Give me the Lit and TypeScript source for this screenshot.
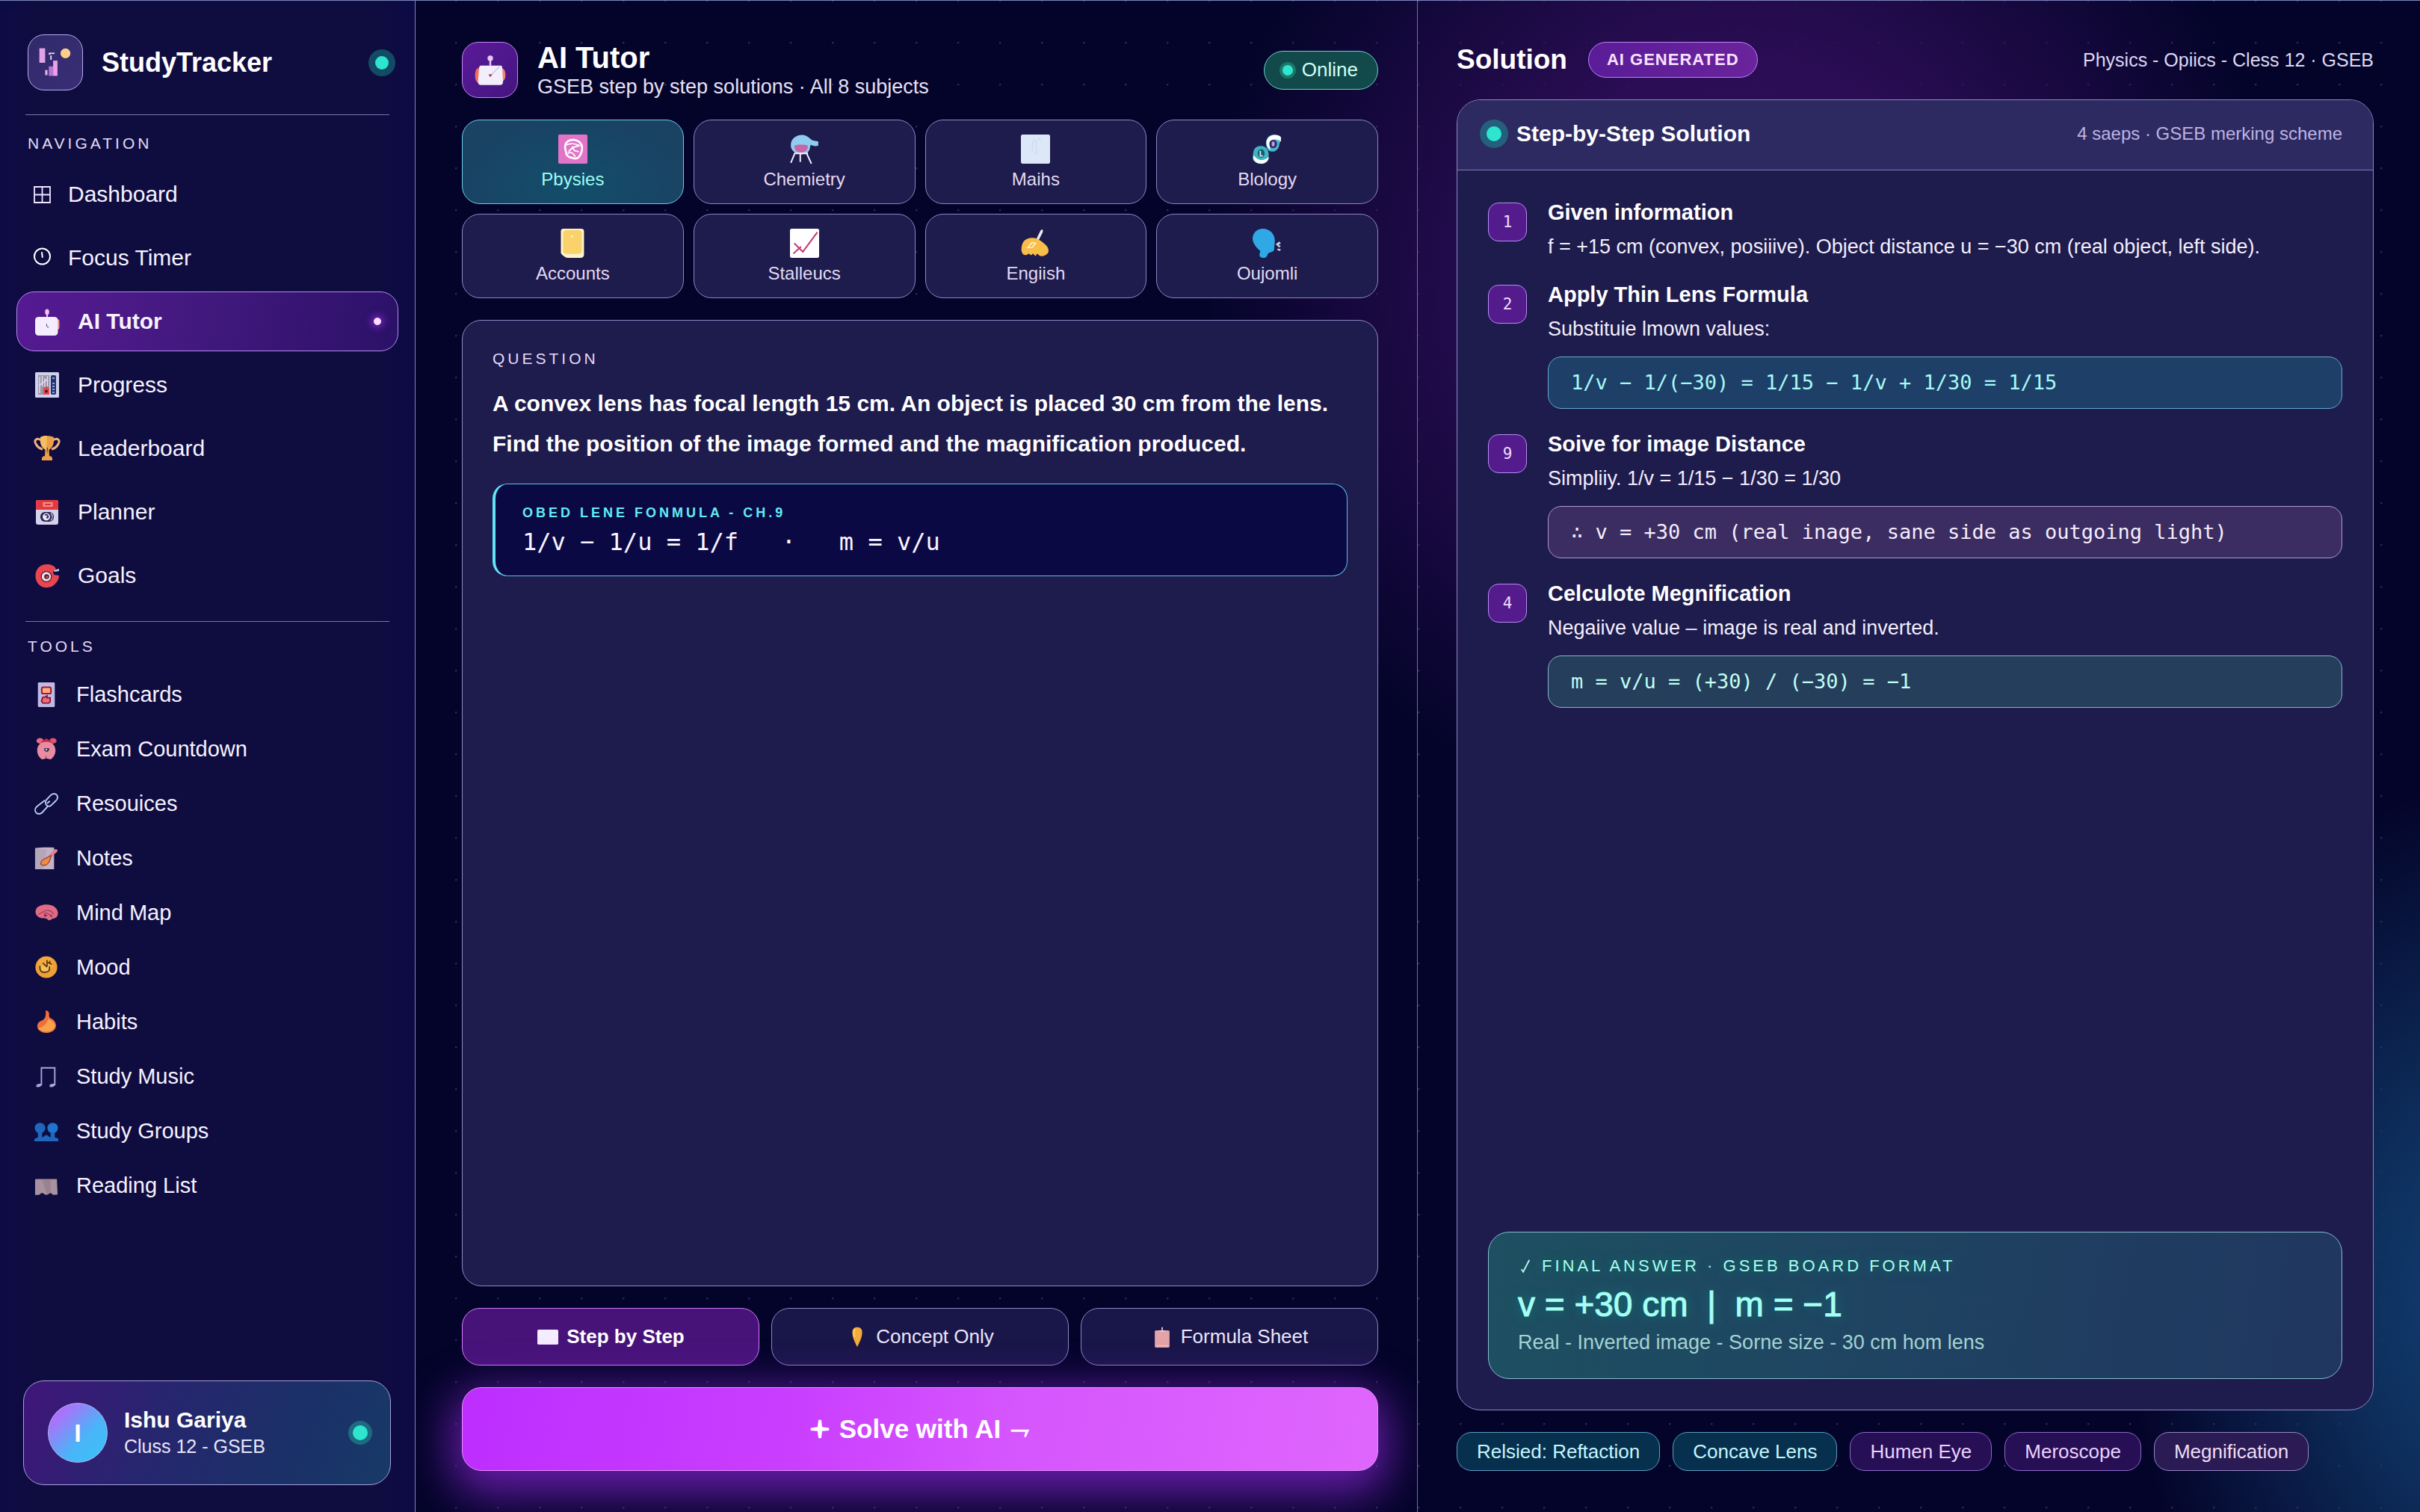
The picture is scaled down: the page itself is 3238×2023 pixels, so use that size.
import { LitElement, html, css, svg, type TemplateResult } from "lit";
import { customElement, property, state } from "lit/decorators.js";
import { classMap } from "lit/directives/class-map.js";

/* Icon artwork, each drawn on a 34 x 34 board. */
const ART: Record<string, TemplateResult> = {
  logo: svg`
    <rect x="6" y="7" width="4" height="10" fill="#dfa3e6"/>
    <path d="M13 11.500V10.500H16.500M14 12v3" stroke="#e6d8f5" stroke-width="1" fill="none"/>
    <circle cx="24" cy="10.500" r="3.400" fill="#ffcf8a"/>
    <path d="M15.500 15.500h3v10.500h-3z" fill="#e9a2ea"/>
    <path d="M12.500 19.500h3v6.500h-3z" fill="#b777d2"/>
    <path d="M10 22h1.600v3.500H10z" fill="#e3b5ee"/>`,
  grid: svg`<path d="M6 7h21v21H6zM16.500 7v21M6 17.500h21" fill="none" stroke="#f0e6ff" stroke-width="1.800"/>`,
  timer: svg`<circle cx="16.500" cy="15" r="10.500" fill="none" stroke="#fff" stroke-width="2"/><path d="M16 10l.8 6" stroke="#fff" stroke-width="2" stroke-linecap="round"/>`,
  robot: svg`
    <ellipse cx="17" cy="4.500" rx="2.800" ry="4" fill="#f3c3ee"/><path d="M16 7h2v6h-2z" fill="#f3c3ee"/>
    <path d="M26 14h4.500c2 0 3 1.200 3 3v8c0 2-1 3-3 3H26z" fill="#ee8d86"/>
    <rect x="1" y="11" width="30.500" height="25" rx="4.500" fill="#f4ecff"/>
    <path d="M16.500 20.500c-.4 2.500.4 4.500 2.500 4.500" fill="none" stroke="#3a2c52" stroke-width="1"/>`,
  robotBig: svg`
    <circle cx="17" cy="4" r="3" fill="#e9c6f3"/><path d="M16 6h2v6h-2z" fill="#e9c6f3"/>
    <ellipse cx="4" cy="22.500" rx="3.500" ry="8" fill="#ef6f62"/><ellipse cx="30" cy="22" rx="3.500" ry="7" fill="#ef8272"/>
    <path d="M7 12h21c1.500 0 2 1 2 2.500l.8 14c.2 3-1 4.500-3 4.500H6.500c-2 0-3-1.500-2.800-4L5 14c0-1.300.8-2 2-2z" fill="#f3eefc"/>
    <path d="M27 13l-9 9" stroke="#a8a3c4" stroke-width=".8"/><path d="M15 21.500h4.200L17 24.500z" fill="#9a3450"/>`,
  news: svg`
    <rect x="1" y="0" width="32" height="34" rx="1.500" fill="#cfd0ea"/>
    <rect x="5" y="4" width="15" height="26" fill="#9a94a9"/>
    <path d="M7 6v22M10.500 5v14M14 8v12M17.500 5v14M6 18l11-8" stroke="#e8e4f4" stroke-width="1.300"/>
    <path d="M12 30V22c2-4 6-3 8 0v8z" fill="#e8464c"/><circle cx="16" cy="25.500" r="2" fill="#4b1733"/>
    <rect x="22" y="4" width="7" height="26" rx="2" fill="#1f3370"/>
    <path d="M24 8h3M24 15h3M24 19h3M24 23h3M24 27h3" stroke="#b8c8ee" stroke-width="1.600"/>`,
  trophy: svg`
    <path d="M9 6c-6-4-10 0-7 5 2 4 5 6 9 7M25 6c6-4 10 0 7 5-2 4-5 6-9 7" fill="none" stroke="#f1b27f" stroke-width="3"/>
    <path d="M8 2c4-2.500 14-2.500 18 0 1 9-2 14-6.500 17l.5 8c3 .5 4 1.500 4 3.500v2.500H10v-2.500c0-2 1-3 4-3.500l.5-8C10 16 7 11 8 2z" fill="#eba047"/>
    <path d="M8 2c4-2.500 9-2 9-2l-1 19C10 16 7 11 8 2z" fill="#f6bd62"/>
    <path d="M16.500 15l1.500 2-1 8z" fill="#5b2b1c"/>`,
  calendar: svg`
    <rect x="2" y="1" width="30" height="33" rx="3" fill="#d6d1ea"/>
    <path d="M2 14V5c0-2.500 1-4 3.500-4h23C31 1 32 2.500 32 5v9z" fill="#e5393f"/>
    <rect x="11.500" y="4" width="13" height="6" fill="#f08f88"/><rect x="14" y="6" width="8" height="2" fill="#c93a3f"/>
    <rect x="8" y="17" width="18" height="13" rx="6" fill="#292552"/>
    <circle cx="16" cy="23.500" r="5" fill="#e8e4f8"/><path d="M14 21c3-1 5 1 4 3.500h-2" fill="none" stroke="#292552" stroke-width="1.800"/>
    <path d="M22 18.500c2.500 3 2.500 7 0 10" fill="none" stroke="#c9c4e4" stroke-width="1.300"/>`,
  target: svg`
    <path d="M17 2c6 0 10 2.500 12 6l-4 4 1 4 7 1c0 4-2 8-5 11-5 6-15 7-21 2C0 24 0 13 5 7c3-3.500 7-5 12-5z" fill="#ea4650"/>
    <path d="M26 10l7-2v3l-6 1z" fill="#b9d2f4"/>
    <circle cx="16" cy="18.500" r="7.500" fill="#4a1d38"/><circle cx="16" cy="18.500" r="6.200" fill="#f4dde6"/>
    <circle cx="16.500" cy="18.500" r="3.300" fill="#572030"/><circle cx="17" cy="19" r="1.500" fill="#b06c55"/>`,
  flash: svg`
    <rect x="5" y="0" width="24" height="35" rx="1.500" fill="#bfb9e4"/>
    <rect x="10.500" y="7" width="13" height="9" rx="2" fill="#ffb07f" stroke="#a8162a" stroke-width="2.200"/>
    <path d="M12 21h3l3-2v3h4.500v5.500l-2 2H12l-2-3z" fill="#ea6a80" stroke="#7e1327" stroke-width="1.800"/>`,
  alarm: svg`
    <ellipse cx="8" cy="5.500" rx="5" ry="4" fill="#e76b83"/><ellipse cx="26.500" cy="5.500" rx="5" ry="4" fill="#dc5670"/>
    <path d="M9 7l8-5 8 5-2 5H11z" fill="#ce2748"/>
    <path d="M17 7c8 0 13 5 13 12 0 6-3 10-7 13l-6-1.500L11 32c-4-3-7-7-7-13C4 12 9 7 17 7z" fill="#e98ba1"/>
    <path d="M14 16h7v3l-3 2.500-4-2z" fill="#43304f"/><circle cx="17" cy="18" r="1.200" fill="#e7dcef"/><path d="M16.500 27v4" stroke="#8e3b5c" stroke-width="1.200"/>`,
  link: svg`<g fill="none" stroke="#b9cdf6" stroke-width="2">
    <path d="M16.500 12.500l7-7.500c3-2.500 7-2.500 8.700.5 1.400 2.500.5 5.300-1.500 7.500l-7.200 7c-2.500 2-6 1-7-1.500-1-2-.8-4 0-6z"/>
    <path d="M15 12.500L4 21c-3 2.500-3.800 6-2 8.500 2 3 6 3 9 .5l8-9"/><path d="M18 17l4-3.500"/></g>`,
  memo: svg`
    <path d="M1 3c9-1.500 18-1 27-1v31H1z" fill="#c3b3c6"/>
    <path d="M1 3c4 2 12 1.500 17 2l-6 28H1z" fill="#ad9cb1" opacity=".6"/>
    <path d="M10 21c5-5 12-7 16-14 2-3.500 6-3 7-1-1 4-6 5-8 10-2 4-4 10-9 12-3 1-6 0-7-1z" fill="#e5838c"/>
    <path d="M10 21c5-4 9-4 14-8-2 7-3 12-8 14-3 1-6 0-7-1z" fill="#f08a45" stroke="#5e2c36" stroke-width="1"/>`,
  brain: svg`
    <path d="M3 11C9 4 24 4 30 10c5 5 4 11 1 14-3 2-5 1-7 3-2 1.500-5 1-6-1-2-1-4-1-6-1C4 25-1 18 3 11z" fill="#df6c84"/>
    <path d="M6 20c5-3 8-7 14-6 4 1 7 3 7 6M13 19c2-2 6-2 8 1" fill="none" stroke="#a53d5f" stroke-width="1.300"/><path d="M14 20l3 1-3 1.500M22 20l3 3" stroke="#6d2348" stroke-width="1.500" fill="none"/>`,
  mood: svg`
    <circle cx="17" cy="17" r="15.500" fill="#ee9f35"/><circle cx="16" cy="13" r="11" fill="#f6b548" opacity=".5"/>
    <path d="M8 15c-1 8 3 10 8 9 5 0 6-3 5.500-8" fill="#f2c15a" stroke="#4f2d12" stroke-width="1.800"/>
    <path d="M12 11l6 6M18 7v9M19 10l6 3M22 8v4" stroke="#4f2d12" stroke-width="1.700" fill="none"/>`,
  fire: svg`
    <path d="M16 1c3 0 5 2 5 5-.3 3 0 5 2 6 7 3 9 9 7 14-4 9-20 9-25 1-2-5 0-9 4-11 5-2 8-4 7-15z" fill="#ee6f3c"/>
    <path d="M20 13c5 2 11 7 9 12-4 8-19 8-24 1 6 0 11-4 15-13z" fill="#f8a24b"/>`,
  music: svg`<path d="M10 30V5h19v25" fill="none" stroke="#a9a6e0" stroke-width="2"/><path d="M10 29c0 4-7 4.500-7.500 2C2.500 28 7 27 10 28zM29 29c0 4-7 4.500-7.500 2-.2-3 4.500-4 7.500-3z" fill="#a9a6e0"/>`,
  groups: svg`
    <circle cx="8" cy="13" r="7.500" fill="#1f66bd"/><circle cx="26" cy="13" r="7.500" fill="#2173cc"/>
    <path d="M0 32c-1-4 2-5 5-5.500V19h6v7.500l6-4 6 4V19h6v7.500c4 .5 6 1.500 5 5.500z" fill="#1f66bd"/>`,
  book: svg`<path d="M2 8h30l1 22-6 .5c-2 0-2-2.500-4-2.500s-3 2.500-6 2.500-3.500-2.500-6-2.500-3 2.500-5 2.500H1V9z" fill="#a8929f"/><path d="M11 9h12v19c-2 0-3 2-5 2z" fill="#98838f"/>`,
  atom: svg`
    <rect x="0" y="0" width="34" height="34" rx="1.500" fill="#e274c8"/>
    <path d="M11 8c4-3 11-2 14 1 4 4 3 10 1 14-2 5-6 6-10 4-4 0-7-3-7-7-2-5-1-10 2-12z" fill="none" stroke="#fff" stroke-width="2.300"/>
    <path d="M9 12c6-2 10-2 16 1M12 20c5-6 8-6 13-7M16 14l3 5 5 1M11 22c4-2 6-1 9 4" fill="none" stroke="#fff" stroke-width="1.600"/>`,
  alembic: svg`
    <path d="M1 12C1 4 9 0 15 .5c6 .5 8 5 12 6.500l6 1v5c-4 1-7 0-9-1l-1 5c-2 5-5 6-9 6S4 21 2 17c-1-2-1-3-1-5z" fill="#8fcdf0"/>
    <path d="M5 13c4-1.500 12-1.500 16 0 0 5-3 8-8 8s-8-3-8-8z" fill="#c765a6"/>
    <path d="M6 21L1 33M12 22v10M19 21l6 13M5 22h16" stroke="#f5f0ff" stroke-width="1.700" fill="none"/>`,
  maths: svg`<rect x="0" y="0" width="34" height="34" rx="2" fill="#dce8f8"/><path d="M13 20l1-12c0-2 4-2 4 0v14h-3M19 6c2-2 4-1 4 0" fill="none" stroke="#cbd8ec" stroke-width="1"/>`,
  dna: svg`
    <path d="M19 2c4-3 11-2 14 1 1 5-2 6-2 10-2 7-8 8-12 6-4-4-5-12 0-17z" fill="#4fb6cf"/>
    <path d="M19 3c4-4 12-3 14 0v5c-4-3-8-3-11-1-2 2-3 8-1 11-5-3-7-11-2-15z" fill="#fff"/>
    <ellipse cx="24" cy="11" rx="4.500" ry="5" fill="#2b2a60"/><ellipse cx="24" cy="11" rx="1.800" ry="3" fill="#b8a1e4"/>
    <path d="M2 17c3-5 12-5 15 0 4 6 1 15-4 17-5 1-12-1-13-6 1-4 0-7 2-11z" fill="#3fb3c0"/>
    <path d="M1 24c-1 6 3 10 9 10 5 0 9-3 9-8-3 3-8 5-12 3-3-1-4-3-6-5z" fill="#fff"/>
    <ellipse cx="10" cy="22" rx="4" ry="5" fill="#155a70"/><path d="M9 19v6h3" stroke="#c9eef2" stroke-width="1.600" fill="none"/>`,
  ledger: svg`
    <path d="M6 0h20c3 0 4 1 4 3v27c0 2.500-1.500 4-4 4H11c-3 0-8-4-8-6V3c0-2 1-3 3-3z" fill="#fff4c9"/>
    <rect x="5.500" y="1.500" width="22" height="28" rx="4" fill="#fad26b"/><circle cx="16" cy="9" r="1.500" fill="#ffe9a6"/>`,
  chart: svg`<rect x="0" y="0" width="34" height="34" rx="2" fill="#fff"/><path d="M4 29l9-8M5 17l10 10L32 4" fill="none" stroke="#c63b78" stroke-width="1.800"/>`,
  hand: svg`
    <path d="M18 12l5-10c2-2 3-1 2.500 2l-5 10z" fill="#e9eaf6"/>
    <path d="M3 15c3-4 9-5 13-4 5 1 8 4 12 7 5 4 5 9 3 11-3 3-7 4-10 2l-2-2-2 3-3-3-2 2-3-2c-3 3-7 2-8-2-1-4 0-9 2-12z" fill="#f9bd4a"/>
    <path d="M8 22l5-6 4 1-4 5z" fill="none" stroke="#fff0c4" stroke-width="1.500"/>`,
  talk: svg`
    <path d="M12 0c8 0 14 6 14 14l-1 11c-2 3-5 2-7 4-1 3-2 5-5 5-3 0-5-1-5-4l1-4C4 22 0 16 0 12 0 5 5 0 12 0z" fill="#2ea9e6"/>
    <path d="M27 18l4-3 2 2-3 2 3 1-2 2zM29 23l4 1-1 2-3-1z" fill="#cfd3ee"/>`,
  page: svg`<rect x="0" y="5" width="34" height="24" rx="2" fill="#f4ecff"/>`,
  bulb: svg`<path d="M17 1c5 0 8 3 8 8 0 8-4 16-8 24C13 25 9 17 9 9c0-5 3-8 8-8z" fill="#f5ad3a"/><path d="M14 4c-3 2-3 7-1 13" stroke="#ffd07a" stroke-width="2" fill="none"/>`,
  clip: svg`<rect x="5" y="6" width="24" height="28" rx="2" fill="#e3a3a8"/><path d="M17 1v5M12 7h10" stroke="#f4d4da" stroke-width="2"/><path d="M7 31h20" stroke="#f3c7cb" stroke-width="1.500"/>`,
  sparkle: svg`<path d="M14.500 1h5L21 13.500 33 15v4.500L21 20.500 19.500 33h-5L13 20.500 1 19.500V15l12-1.500z" fill="#fff"/>`,
  arrow: svg`<path d="M1 18h32l-6 13h-3l2-9H1z" fill="#fff"/>`,
  tick: svg`<path d="M8 24l4 6L26 3" fill="none" stroke="#b9fff0" stroke-width="3"/>`,
};

@customElement("st-icon")
export class StIcon extends LitElement {
  @property() name = "grid";

  static styles = css`
    :host {
      display: inline-flex;
      flex: none;
    }
    svg {
      width: 100%;
      height: 100%;
      display: block;
      overflow: visible;
    }
  `;

  render() {
    return html`<svg viewBox="0 0 34 34" preserveAspectRatio="xMidYMid meet" aria-hidden="true">${ART[this.name]}</svg>`;
  }
}

interface NavItem {
  icon: string;
  label: string;
  small?: boolean;
}

const NAV: NavItem[] = [
  { icon: "grid", label: "Dashboard", small: true },
  { icon: "timer", label: "Focus Timer", small: true },
  { icon: "robot", label: "AI Tutor" },
  { icon: "news", label: "Progress" },
  { icon: "trophy", label: "Leaderboard" },
  { icon: "calendar", label: "Planner" },
  { icon: "target", label: "Goals" },
];

const TOOLS: NavItem[] = [
  { icon: "flash", label: "Flashcards" },
  { icon: "alarm", label: "Exam Countdown" },
  { icon: "link", label: "Resouices" },
  { icon: "memo", label: "Notes" },
  { icon: "brain", label: "Mind Map" },
  { icon: "mood", label: "Mood" },
  { icon: "fire", label: "Habits" },
  { icon: "music", label: "Study Music" },
  { icon: "groups", label: "Study Groups" },
  { icon: "book", label: "Reading List" },
];

const SUBJECTS: NavItem[] = [
  { icon: "atom", label: "Pbysies" },
  { icon: "alembic", label: "Chemietry" },
  { icon: "maths", label: "Maihs" },
  { icon: "dna", label: "Blology" },
  { icon: "ledger", label: "Accounts" },
  { icon: "chart", label: "Stalleucs" },
  { icon: "hand", label: "Engiish" },
  { icon: "talk", label: "Oujomli" },
];

const MODES: NavItem[] = [
  { icon: "page", label: "Step by Step" },
  { icon: "bulb", label: "Concept Only" },
  { icon: "clip", label: "Formula Sheet" },
];

interface Step {
  mark: string;
  title: string;
  text: string;
  math?: string;
  tone?: string;
}

const STEPS: Step[] = [
  {
    mark: "1",
    title: "Given information",
    text: "f = +15 cm (convex, posiiive). Object distance u = −30 cm (real object, left side).",
  },
  {
    mark: "2",
    title: "Apply Thin Lens Formula",
    text: "Substituie lmown values:",
    math: "1/v − 1/(−30) = 1/15 − 1/v + 1/30 = 1/15",
    tone: "blue",
  },
  {
    mark: "9",
    title: "Soive for image Distance",
    text: "Simpliiy. 1/v = 1/15 − 1/30 = 1/30",
    math: "∴ v = +30 cm (real inage, sane side as outgoing light)",
    tone: "plum",
  },
  {
    mark: "4",
    title: "Celculote Megnification",
    text: "Negaiive value – image is real and inverted.",
    math: "m = v/u = (+30) / (−30) = −1",
    tone: "teal",
  },
];

const TOPICS = [
  { label: "Relsied: Reftaction", tone: "aqua" },
  { label: "Concave Lens", tone: "aqua" },
  { label: "Humen Eye", tone: "violet" },
  { label: "Meroscope", tone: "violet" },
  { label: "Megnification", tone: "mauve" },
];

@customElement("app-root")
export class AppRoot extends LitElement {
  @state() private page = "AI Tutor";
  @state() private subject = "Pbysies";
  @state() private mode = "Step by Step";

  static styles = css`
    :host {
      display: block;
      font-family: "Liberation Sans", Arial, sans-serif;
      color: #fff;
      --line: #8f86c2;
      --card: #1e1b4d;
      --mono: "DejaVu Sans Mono", "Liberation Mono", monospace;
    }
    * {
      box-sizing: border-box;
    }
    h1,
    h2,
    h3,
    p,
    ul,
    ol {
      margin: 0;
      padding: 0;
    }
    ul,
    ol {
      list-style: none;
    }
    button {
      font: inherit;
      color: inherit;
      margin: 0;
      cursor: pointer;
    }
    a {
      color: inherit;
      text-decoration: none;
    }

    .shell {
      display: grid;
      grid-template-columns: 556px minmax(0, 1fr) minmax(0, 1fr);
      min-height: 100vh;
      border-top: 1px solid #7d84bd;
      background:
        radial-gradient(ellipse 520px 700px at 104% 86%, #124478 0%, rgba(16, 58, 106, 0.8) 40%, transparent 100%),
        radial-gradient(ellipse 720px 740px at 72% 19%, #32105e 0%, rgba(46, 14, 88, 0.9) 42%, transparent 100%),
        radial-gradient(circle at 1px 1px, rgba(150, 150, 230, 0.24) 1px, transparent 2px) 49px 55px / 56px 56px,
        #04042a;
    }

    .dot {
      flex: none;
      border-radius: 50%;
      background: #2ee6d0;
    }
    .dot.brand-dot {
      width: 18px;
      height: 18px;
      margin: 9px;
      box-shadow: 0 0 0 9px #124b63;
    }
    .dot.user-dot {
      width: 20px;
      height: 20px;
      margin: 6px;
      box-shadow: 0 0 0 6px #1c6b7e;
    }
    .dot.pill-dot {
      width: 14px;
      height: 14px;
      margin: 4px;
      box-shadow: 0 0 0 4px #1c7866;
    }
    .dot.card-dot {
      width: 20px;
      height: 20px;
      margin: 9px;
      box-shadow: 0 0 0 9px #24607c;
    }

    /* Sidebar */
    .side {
      display: flex;
      flex-direction: column;
      padding: 45px 0 36px;
      border-right: 1px solid #8581b4;
      background: linear-gradient(90deg, #0d0b44 0%, #0f0c40 10%, #0f0c40 90%, #0c0a45 100%);
    }
    .brand {
      display: flex;
      align-items: center;
      padding: 0 26px 0 37px;
      gap: 25px;
    }
    .brand-mark {
      display: grid;
      place-items: center;
      width: 74px;
      height: 75px;
      border: 1px solid #b9abec;
      border-radius: 22px;
      background: linear-gradient(135deg, #302a68, #3a2e78);
    }
    .brand-mark st-icon {
      width: 66px;
      height: 66px;
    }
    .brand-name {
      flex: 1;
      font-size: 36px;
      line-height: 44px;
      font-weight: 700;
    }
    .rule {
      height: 1px;
      margin: 32px 34px 0;
      background: #7a73b2;
    }
    .rule.second {
      margin-top: 21px;
    }
    .caption {
      font-size: 21px;
      line-height: 26px;
      letter-spacing: 4px;
      font-weight: 400;
      color: #e3dcf6;
    }
    .side .caption {
      margin: 25px 37px 15px;
    }
    .side .caption.tools {
      margin: 20px 37px 17px;
    }
    .menu {
      display: flex;
      flex-direction: column;
      gap: 5px;
      padding: 0 22px;
    }
    .entry {
      display: flex;
      align-items: center;
      gap: 24px;
      height: 80px;
      padding: 0 22px 0 23px;
      border: 1px solid transparent;
      border-radius: 24px;
      font-size: 30px;
      color: #f6f2ff;
    }
    .entry st-icon {
      width: 34px;
      height: 34px;
    }
    .entry.slim {
      gap: 17px;
      padding-left: 17px;
    }
    .entry.current {
      font-weight: 700;
      border-color: #b48aee;
      background: linear-gradient(100deg, #561a93 0%, #43197f 45%, #2b1168 100%);
    }
    .entry .spark {
      width: 10px;
      height: 10px;
      margin-left: auto;
      border-radius: 50%;
      background: #ffdcff;
      box-shadow: 0 0 10px 4px #6a23b2;
    }
    .menu.tools .entry {
      height: 68px;
      gap: 24px;
      font-size: 29px;
    }
    .menu.tools st-icon {
      width: 32px;
      height: 32px;
    }
    .user {
      display: flex;
      align-items: center;
      gap: 22px;
      height: 140px;
      margin: auto 32px 0 31px;
      padding: 0 24px 0 32px;
      border: 1px solid #a7a0dc;
      border-radius: 28px;
      background: linear-gradient(115deg, #40157a 0%, #26266e 38%, #1b3068 70%, #173a68 100%);
    }
    .avatar {
      display: grid;
      place-items: center;
      width: 80px;
      height: 80px;
      border: 1px solid #a9b9f6;
      border-radius: 50%;
      background: linear-gradient(135deg, #b46cfa 15%, #4ab4f8 60%, #38c4f8 100%);
      font-size: 34px;
      font-weight: 700;
    }
    .who {
      flex: 1;
    }
    .who-name {
      font-size: 30px;
      line-height: 36px;
      font-weight: 700;
    }
    .who-class {
      font-size: 25px;
      line-height: 34px;
      color: #e9e6fa;
    }

    /* Tutor column */
    .tutor {
      display: flex;
      flex-direction: column;
      gap: 29px;
      padding: 55px 52px 55px 62px;
      border-right: 1px solid #726ea8;
      min-width: 0;
      overflow: clip;
    }
    .tutor-head {
      display: flex;
      align-items: center;
      gap: 26px;
      height: 75px;
    }
    .tutor-mark {
      display: grid;
      place-items: center;
      width: 75px;
      height: 75px;
      border: 1px solid #c285f4;
      border-radius: 22px;
      background: linear-gradient(135deg, #5a1a98, #451580);
    }
    .tutor-mark st-icon {
      width: 42px;
      height: 42px;
    }
    .tutor-title {
      flex: 1;
    }
    .tutor-title h1 {
      font-size: 40px;
      line-height: 44px;
      font-weight: 700;
    }
    .tutor-title p {
      font-size: 27px;
      line-height: 34px;
      color: #e6e0f6;
    }
    .online {
      display: flex;
      align-items: center;
      gap: 8px;
      height: 52px;
      padding: 0 26px 0 20px;
      border: 1px solid #6ad2c2;
      border-radius: 26px;
      background: #124a4c;
      font-size: 26px;
      color: #d2fff4;
    }
    .subjects {
      display: grid;
      grid-template-columns: repeat(4, minmax(0, 1fr));
      gap: 13px;
    }
    .subject {
      display: flex;
      flex-direction: column;
      align-items: center;
      gap: 7px;
      height: 113px;
      padding: 19px 0 0;
      border: 1px solid var(--line);
      border-radius: 24px;
      background: var(--card);
      font-size: 24px;
      line-height: 28px;
      color: #e2daf2;
    }
    .subject st-icon {
      width: 39px;
      height: 39px;
    }
    .subject.on {
      border-color: #6accea;
      background: radial-gradient(ellipse at 50% 80%, #124e6a, #1a4263 75%);
      color: #9ffcf2;
    }
    .ask {
      flex: 1;
      padding: 30px 40px;
      border: 1px solid var(--line);
      border-radius: 26px;
      background: var(--card);
      min-height: 420px;
    }
    .ask .caption {
      padding-top: 8px;
    }
    .question {
      margin-top: 20px;
      font-size: 30px;
      line-height: 54px;
      font-weight: 700;
    }
    .formula {
      margin-top: 26px;
      padding: 26px 36px 23px;
      border: 1px solid #58bfe0;
      border-left: 4px solid #5fe4f4;
      border-radius: 20px;
      background: #0b0944;
    }
    .formula-name {
      font-size: 18px;
      line-height: 24px;
      letter-spacing: 4px;
      font-weight: 700;
      color: #62ecf4;
    }
    .formula-body {
      margin-top: 5px;
      font-family: var(--mono);
      font-size: 32px;
      line-height: 44px;
      white-space: pre-wrap;
      color: #fbf5ff;
    }
    .modes {
      display: grid;
      grid-template-columns: repeat(3, minmax(0, 1fr));
      gap: 16px;
    }
    .mode {
      display: flex;
      align-items: center;
      justify-content: center;
      gap: 10px;
      height: 77px;
      padding: 0;
      border: 1px solid var(--line);
      border-radius: 24px;
      background: #191649;
      font-size: 26px;
      color: #ece6fa;
    }
    .mode st-icon {
      width: 30px;
      height: 28px;
    }
    .mode.on {
      border-color: #cf7efa;
      background: #471379;
      font-weight: 700;
      color: #fff;
    }
    .solve {
      display: flex;
      align-items: center;
      justify-content: center;
      gap: 13px;
      height: 112px;
      padding: 0;
      border: 1px solid #ea8cff;
      border-radius: 26px;
      background: linear-gradient(100deg, #bd2eff 0%, #c93dff 35%, #d556fd 60%, #df66fd 100%);
      box-shadow: 0 18px 60px 12px rgba(132, 36, 204, 0.78);
      font-size: 35px;
      font-weight: 700;
      color: #fff;
    }
    .solve st-icon {
      width: 26px;
      height: 26px;
    }

    /* Solution column */
    .result {
      display: flex;
      flex-direction: column;
      gap: 29px;
      padding: 55px 62px 55px 52px;
      min-width: 0;
    }
    .result-head {
      display: flex;
      align-items: center;
      gap: 28px;
      height: 48px;
    }
    .result-head h2 {
      font-size: 37px;
      line-height: 48px;
      font-weight: 700;
    }
    .made {
      height: 48px;
      padding: 0 24px;
      border: 1px solid #bd80f8;
      border-radius: 24px;
      background: linear-gradient(90deg, #5a1c98, #6a249c);
      font-size: 22px;
      line-height: 46px;
      font-weight: 700;
      letter-spacing: 1px;
      color: #fbe2ff;
    }
    .trail {
      margin-left: auto;
      font-size: 25px;
      color: #dfd8f2;
    }
    .sheet {
      flex: 1;
      display: flex;
      flex-direction: column;
      border: 1px solid var(--line);
      border-radius: 32px;
      background: var(--card);
      overflow: hidden;
    }
    .sheet-head {
      display: flex;
      align-items: center;
      gap: 11px;
      height: 94px;
      padding: 0 41px 4px 30px;
      border-bottom: 1px solid #7f77b4;
      background: #2d2a61;
    }
    .sheet-head h3 {
      font-size: 30px;
      line-height: 36px;
      font-weight: 700;
    }
    .sheet-note {
      margin-left: auto;
      font-size: 24px;
      color: #bdb3e2;
    }
    .sheet-body {
      flex: 1;
      display: flex;
      flex-direction: column;
      padding: 39px 41px 41px;
    }
    .steps {
      display: flex;
      flex-direction: column;
      gap: 30px;
    }
    .step {
      display: flex;
      gap: 28px;
    }
    .step-mark {
      flex: none;
      display: grid;
      place-items: center;
      width: 52px;
      height: 52px;
      margin-top: 4px;
      border: 1px solid #b78df6;
      border-radius: 14px;
      background: #531b8c;
      font-family: var(--mono);
      font-size: 21px;
      color: #f2dcff;
    }
    .step-main {
      flex: 1;
      min-width: 0;
    }
    .step-title {
      font-size: 29px;
      line-height: 34px;
      font-weight: 700;
    }
    .step-text {
      margin-top: 12px;
      font-size: 27px;
      line-height: 34px;
      color: #f2eefb;
    }
    .math {
      margin-top: 20px;
      padding: 0 30px;
      border: 1px solid;
      border-radius: 18px;
      font-family: var(--mono);
      font-size: 27px;
      line-height: 68px;
    }
    .math.blue {
      border-color: #68a8d2;
      background: #1e4068;
      color: #a5fbf6;
    }
    .math.plum {
      border-color: #b09ad0;
      background: #3b2d62;
      color: #f6ecfc;
    }
    .math.teal {
      border-color: #8cb4d0;
      background: #253e5c;
      color: #c0fff2;
    }
    .final {
      margin-top: auto;
      padding: 30px 39px 31px;
      border: 1px solid #84bfce;
      border-radius: 28px;
      background: linear-gradient(100deg, #1d5061 0%, #1f4462 45%, #20365f 100%);
    }
    .final-name {
      display: flex;
      align-items: center;
      gap: 12px;
      font-size: 22px;
      line-height: 30px;
      letter-spacing: 4px;
      font-weight: 400;
      color: #a8fff0;
      text-shadow: 0 0 14px #0c7a6a;
    }
    .final-name st-icon {
      width: 20px;
      height: 20px;
    }
    .final-value {
      margin-top: 9px;
      font-size: 46px;
      line-height: 54px;
      font-weight: 400;
      white-space: pre-wrap;
      color: #a4fff4;
      -webkit-text-stroke: 1px #a4fff4;
      text-shadow: 0 0 16px #0e7f7c;
    }
    .final-note {
      margin-top: 7px;
      font-size: 27px;
      line-height: 34px;
      color: #a4d2d2;
    }
    .topics {
      display: flex;
      gap: 17px;
    }
    .topic {
      height: 52px;
      padding: 0 26px;
      border: 1px solid;
      border-radius: 20px;
      font-size: 26px;
      line-height: 48px;
    }
    .topic.aqua {
      border-color: #5c9cc0;
      background: #06304e;
      color: #c6f6fc;
    }
    .topic.violet {
      border-color: #8c68c8;
      background: #270f55;
      color: #ecd2fc;
    }
    .topic.mauve {
      border-color: #9684c4;
      background: #2a1b54;
      color: #f0dcf6;
    }
  `;

  private entry(item: NavItem) {
    const current = item.label === this.page;
    return html`<li>
      <a
        class=${classMap({ entry: true, slim: !!item.small, current })}
        href="#${item.label}"
        @click=${() => (this.page = item.label)}
      >
        <st-icon name=${item.icon}></st-icon>
        <span>${item.label}</span>
        ${current ? html`<span class="spark"></span>` : null}
      </a>
    </li>`;
  }

  private renderSide() {
    return html`<aside class="side">
      <div class="brand">
        <span class="brand-mark"><st-icon name="logo"></st-icon></span>
        <span class="brand-name">StudyTracker</span>
        <span class="dot brand-dot"></span>
      </div>
      <div class="rule"></div>
      <h2 class="caption">NAVIGATION</h2>
      <ul class="menu">
        ${NAV.map((item) => this.entry(item))}
      </ul>
      <div class="rule second"></div>
      <h2 class="caption tools">TOOLS</h2>
      <ul class="menu tools">
        ${TOOLS.map((item) => this.entry(item))}
      </ul>
      <div class="user">
        <span class="avatar">I</span>
        <div class="who">
          <p class="who-name">Ishu Gariya</p>
          <p class="who-class">Cluss 12 - GSEB</p>
        </div>
        <span class="dot user-dot"></span>
      </div>
    </aside>`;
  }

  private renderTutor() {
    return html`<main class="tutor">
      <header class="tutor-head">
        <span class="tutor-mark"><st-icon name="robotBig"></st-icon></span>
        <div class="tutor-title">
          <h1>AI Tutor</h1>
          <p>GSEB step by step solutions · All 8 subjects</p>
        </div>
        <span class="online"><span class="dot pill-dot"></span>Online</span>
      </header>
      <div class="subjects">
        ${SUBJECTS.map(
          (s) => html`<button
            type="button"
            class=${classMap({ subject: true, on: s.label === this.subject })}
            @click=${() => (this.subject = s.label)}
          >
            <st-icon name=${s.icon}></st-icon>
            <span>${s.label}</span>
          </button>`,
        )}
      </div>
      <section class="ask">
        <h2 class="caption">QUESTION</h2>
        <p class="question">
          A convex lens has focal length 15 cm. An object is placed 30 cm from the lens.<br />
          Find the position of the image formed and the magnification produced.
        </p>
        <div class="formula">
          <p class="formula-name">OBED LENE FONMULA - CH.9</p>
          <p class="formula-body">${"1/v − 1/u = 1/f   ·   m = v/u"}</p>
        </div>
      </section>
      <div class="modes">
        ${MODES.map(
          (m) => html`<button
            type="button"
            class=${classMap({ mode: true, on: m.label === this.mode })}
            @click=${() => (this.mode = m.label)}
          >
            <st-icon name=${m.icon}></st-icon>
            <span>${m.label}</span>
          </button>`,
        )}
      </div>
      <button type="button" class="solve">
        <st-icon name="sparkle"></st-icon>
        <span>Solve with AI</span>
        <st-icon name="arrow"></st-icon>
      </button>
    </main>`;
  }

  private renderResult() {
    return html`<section class="result">
      <header class="result-head">
        <h2>Solution</h2>
        <span class="made">AI GENERATED</span>
        <span class="trail">Physics - Opiics - Cless 12 · GSEB</span>
      </header>
      <article class="sheet">
        <header class="sheet-head">
          <span class="dot card-dot"></span>
          <h3>Step-by-Step Solution</h3>
          <span class="sheet-note">4 saeps · GSEB merking scheme</span>
        </header>
        <div class="sheet-body">
          <ol class="steps">
            ${STEPS.map(
              (s) => html`<li class="step">
                <span class="step-mark">${s.mark}</span>
                <div class="step-main">
                  <h3 class="step-title">${s.title}</h3>
                  <p class="step-text">${s.text}</p>
                  ${s.math ? html`<p class="math ${s.tone}">${s.math}</p>` : null}
                </div>
              </li>`,
            )}
          </ol>
          <div class="final">
            <h3 class="final-name"><st-icon name="tick"></st-icon>FINAL ANSWER · GSEB BOARD FORMAT</h3>
            <p class="final-value">${"v = +30 cm  |  m = −1"}</p>
            <p class="final-note">Real - Inverted image - Sorne size - 30 cm hom lens</p>
          </div>
        </div>
      </article>
      <div class="topics">
        ${TOPICS.map((t) => html`<button type="button" class="topic ${t.tone}">${t.label}</button>`)}
      </div>
    </section>`;
  }

  render() {
    return html`<div class="shell">${this.renderSide()}${this.renderTutor()}${this.renderResult()}</div>`;
  }
}
